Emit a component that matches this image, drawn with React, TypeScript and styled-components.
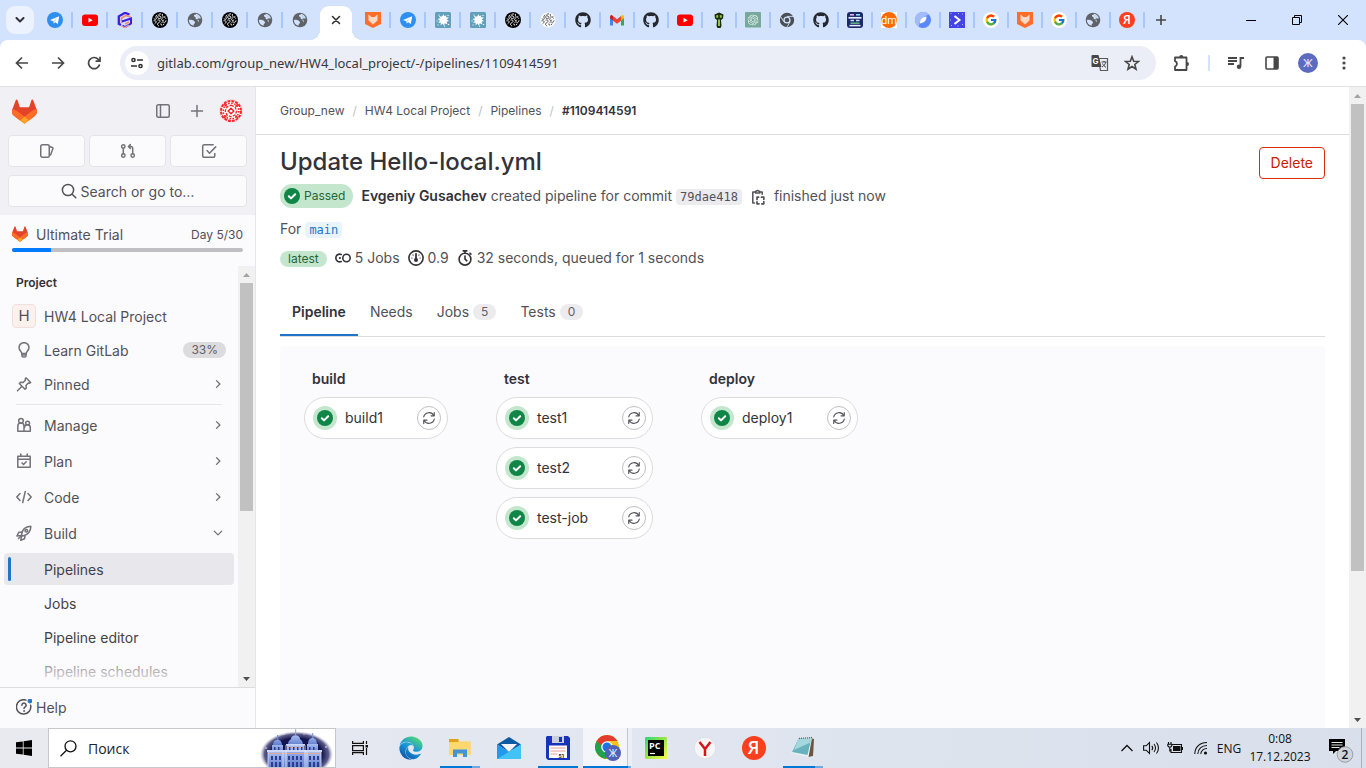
import React from 'react';
import styled, { createGlobalStyle, css } from 'styled-components';
import { FaGithub, FaEdge } from 'react-icons/fa';
import { SiOpenai } from 'react-icons/si';
import { FcGoogle } from 'react-icons/fc';

const uiFont = `Inter, "Noto Sans", sans-serif`;
const segoe = `"Open Sans", "Noto Sans", sans-serif`;
const mono = `"DejaVu Sans Mono", "Liberation Mono", monospace`;

const GlobalStyle = createGlobalStyle`
  *, *::before, *::after { box-sizing: border-box; }
  body { margin: 0; background: #fff; font-family: ${uiFont}; font-size: 14px; color: #333238; }
  button, input { font: inherit; color: inherit; border: 0; padding: 0; margin: 0; background: none; outline: 0; }
  a { color: inherit; text-decoration: none; }
  ul, h1, h2, p { margin: 0; padding: 0; list-style: none; }
  svg { display: block; flex: none; }
`;

/* ---------- shell ---------- */

const Screen = styled.div`
  display: flex;
  flex-direction: column;
  height: 100vh;
  overflow: hidden;
`;

/* ---------- browser chrome ---------- */

const TabStrip = styled.div`
  display: flex;
  align-items: center;
  height: 40px;
  flex: none;
  padding-left: 6px;
  background: #d3e3fd;
`;

const TabSearch = styled.button`
  width: 28px;
  height: 28px;
  margin-right: 4px;
  border-radius: 9px;
  background: #ecf3fe;
  display: grid;
  place-items: center;
`;

const Tab = styled.button<{ $narrow?: boolean; $last?: boolean }>`
  display: flex;
  align-items: center;
  justify-content: space-between;
  flex: none;
  width: ${p => (p.$narrow ? 34 : 35)}px;
  height: 16px;
  padding-left: ${p => (p.$narrow ? 8 : 9)}px;
  border-right: 2px solid ${p => (p.$last ? 'transparent' : '#a8c7fa')};
`;

const ActiveTab = styled.div`
  position: relative;
  align-self: flex-end;
  display: grid;
  place-items: center;
  width: 32px;
  height: 34px;
  padding-bottom: 6px;
  margin: 0 4px 0 2px;
  border-radius: 9px 9px 0 0;
  background: #fff;
  &::before, &::after {
    content: '';
    position: absolute;
    bottom: 0;
    width: 10px;
    height: 10px;
  }
  &::before { left: -10px; background: radial-gradient(circle at 0 0, transparent 10px, #fff 10px); }
  &::after { right: -10px; background: radial-gradient(circle at 100% 0, transparent 10px, #fff 10px); }
`;

const NewTab = styled.button`
  width: 32px;
  height: 28px;
  display: grid;
  place-items: center;
`;

const WindowControls = styled.div`
  display: flex;
  margin-left: auto;
`;

const WindowButton = styled.button`
  width: 46px;
  height: 40px;
  display: grid;
  place-items: center;
`;

const ToolbarBack = styled.div`
  flex: none;
  background: #d3e3fd;
`;

const Toolbar = styled.div`
  display: flex;
  align-items: center;
  height: 47px;
  padding: 0 4px;
  background: #fff;
  border-bottom: 1px solid #e1e1e1;
  border-radius: 8px 8px 0 0;
`;

const ToolButton = styled.button`
  width: 36px;
  height: 34px;
  display: grid;
  place-items: center;
`;

const Omnibox = styled.div`
  display: flex;
  align-items: center;
  flex: 1;
  min-width: 0;
  height: 34px;
  margin: 0 8px;
  padding: 0 8px 0 5px;
  border-radius: 17px;
  background: #ebeef7;
`;

const SiteInfo = styled.button`
  width: 24px;
  height: 24px;
  border-radius: 50%;
  background: #fff;
  display: grid;
  place-items: center;
`;

const UrlInput = styled.input`
  flex: 1;
  min-width: 0;
  margin-left: 8px;
  font-family: "Noto Sans", sans-serif;
  font-size: 13px;
  color: #37383b;
`;

const OmniButton = styled.button`
  width: 32px;
  height: 28px;
  display: grid;
  place-items: center;
`;

const ToolDivider = styled.span`
  width: 2px;
  height: 16px;
  margin: 0 8px;
  background: #d3e3fd;
`;

/* ---------- scroll bar ---------- */

const Rail = styled.div`
  display: flex;
  flex-direction: column;
  flex: none;
  width: 17px;
  background: #f1f1f1;
`;

const RailArrow = styled.button`
  height: 17px;
  flex: none;
  display: grid;
  place-items: center;
`;

const RailTrack = styled.div`
  flex: 1;
  min-height: 0;
  padding: 0 2px;
`;

const RailThumb = styled.div<{ $share: number }>`
  height: ${p => p.$share}%;
  background: #c1c1c1;
`;

function ScrollRail({ share }: { share: number }) {
  return (
    <Rail>
      <RailArrow aria-label="Scroll up">
        <svg width="7" height="4" viewBox="0 0 7 4"><path d="M3.5 0 7 4H0z" fill="#a3a3a3" /></svg>
      </RailArrow>
      <RailTrack><RailThumb $share={share} /></RailTrack>
      <RailArrow aria-label="Scroll down">
        <svg width="7" height="4" viewBox="0 0 7 4"><path d="M0 0h7L3.5 4z" fill="#505050" /></svg>
      </RailArrow>
    </Rail>
  );
}

/* ---------- sidebar ---------- */

const Page = styled.div`
  display: flex;
  flex: 1;
  min-height: 0;
`;

const Sidebar = styled.aside`
  display: flex;
  flex-direction: column;
  flex: none;
  width: 256px;
  border-right: 1px solid #e6e6ea;
  background: #fbfafd;
`;

const SideTop = styled.div`
  display: flex;
  flex-direction: column;
  gap: 8px;
  padding: 8px;
  background: #f1f0f4;
`;

const BrandRow = styled.div`
  display: flex;
  align-items: center;
  height: 32px;
  padding: 0 4px;
`;

const BrandActions = styled.div`
  display: flex;
  align-items: center;
  gap: 2px;
  margin-left: auto;
  color: #737278;
`;

const BrandButton = styled.button`
  width: 32px;
  height: 32px;
  display: grid;
  place-items: center;
`;

const AvatarButton = styled.button`
  width: 24px;
  height: 24px;
  margin-left: 4px;
`;

const ShortcutRow = styled.div`
  display: grid;
  grid-template-columns: repeat(3, 1fr);
  gap: 4px;
`;

const sideBox = css`
  display: flex;
  align-items: center;
  justify-content: center;
  height: 32px;
  border: 1px solid #e5e4e9;
  border-radius: 4px;
  background: #fbfafd;
`;

const Shortcut = styled.button`
  ${sideBox}
  color: #737278;
`;

const SideSearch = styled.button`
  ${sideBox}
  gap: 4px;
  color: #535158;
`;

const Trial = styled.a`
  display: block;
  height: 51px;
  padding: 9px 12px 0;
  color: #535158;
`;

const TrialRow = styled.div`
  display: flex;
  align-items: center;
  gap: 8px;
  height: 20px;
`;

const TrialDay = styled.span`
  margin-left: auto;
  font-size: 12px;
`;

const TrialBar = styled.div`
  height: 4px;
  margin-top: 4px;
  border-radius: 2px;
  overflow: hidden;
  background: #bfbfc3;
`;

const TrialFill = styled.div`
  width: 17%;
  height: 100%;
  background: #007bff;
`;

const SideScroll = styled.div`
  display: flex;
  flex: 1;
  min-height: 0;
`;

const SideNav = styled.nav`
  position: relative;
  flex: 1;
  overflow: hidden;
  &::after {
    content: '';
    position: absolute;
    left: 0;
    right: 0;
    bottom: 0;
    height: 40px;
    background: linear-gradient(rgba(251, 250, 253, 0), #fbfafd);
  }
`;

const SideTitle = styled.h2`
  height: 33px;
  padding: 0 16px;
  font-size: 12px;
  line-height: 34px;
  font-weight: 600;
`;

const NavRow = styled.a<{ $tall?: boolean }>`
  display: flex;
  align-items: center;
  gap: 8px;
  height: ${p => (p.$tall ? 36 : 34)}px;
  padding: 0 12px;
  color: #535158;
`;

const NavIcon = styled.span`
  width: 24px;
  display: grid;
  place-items: center;
  color: #737278;
`;

const NavEnd = styled.span`
  margin: 0 2px 0 auto;
  color: #737278;
`;

const NavCount = styled.span`
  margin-left: auto;
  height: 16px;
  padding: 0 8px;
  border-radius: 8px;
  background: #dcdcde;
  color: #626168;
  font-size: 12px;
  line-height: 16px;
`;

const ProjectLetter = styled.span`
  width: 24px;
  height: 24px;
  border: 1px solid #f3dede;
  border-radius: 4px;
  background: #fdf1ee;
  font-size: 15px;
  line-height: 22px;
  text-align: center;
`;

const NavRule = styled.hr`
  height: 1px;
  margin: 3px 16px 2px;
  border: 0;
  background: #e6e5ea;
`;

const SubList = styled.ul`
  padding: 2px 4px 0;
`;

const SubLink = styled.a<{ $active?: boolean }>`
  display: flex;
  align-items: center;
  height: 32px;
  margin-bottom: 2px;
  padding-left: 4px;
  border-radius: 4px;
  color: #434248;
  ${p => p.$active && css`background: #e8e7ec;`}
  &::before {
    content: '';
    width: 3px;
    height: 24px;
    margin-right: 33px;
    border-radius: 2px;
    background: ${p => (p.$active ? '#1f75cb' : 'transparent')};
  }
`;

const HelpBar = styled.div`
  display: flex;
  align-items: center;
  height: 41px;
  padding: 0 0 2px 16px;
  border-top: 1px solid #dcdcde;
`;

const HelpButton = styled.button`
  display: flex;
  align-items: center;
  gap: 4px;
  color: #535158;
`;

/* ---------- main ---------- */

const Main = styled.main`
  display: flex;
  flex-direction: column;
  flex: 1;
  min-width: 0;
  background: #fff;
`;

const Crumbs = styled.nav`
  display: flex;
  align-items: center;
  gap: 8px;
  flex: none;
  height: 48px;
  padding: 0 24px;
  border-bottom: 1px solid #dcdcde;
  font-size: 12px;
  color: #535158;
  strong { font-weight: 600; color: #333238; }
`;

const Slash = styled.span`
  color: #bfbfc3;
`;

const Content = styled.div`
  display: flex;
  flex-direction: column;
  flex: 1;
  min-height: 0;
  padding: 12px 24px 0;
`;

const TitleRow = styled.header`
  display: flex;
  align-items: flex-start;
  justify-content: space-between;
  height: 37px;
`;

const Title = styled.h1`
  font-size: 24px;
  line-height: 30px;
  font-weight: 500;
`;

const DeleteButton = styled.button`
  height: 32px;
  padding: 0 11px;
  border: 1px solid #dd2b0e;
  border-radius: 4px;
  line-height: 18px;
  color: #c91c00;
`;

const InfoRow = styled.div`
  display: flex;
  align-items: center;
  height: 24px;
  line-height: 18px;
  color: #535158;
`;

const PassedBadge = styled.a`
  display: flex;
  align-items: center;
  gap: 4px;
  height: 24px;
  margin-right: 8px;
  padding: 0 8px 0 4px;
  border-radius: 12px;
  background: #c3e6cd;
  color: #24663b;
  font-size: 12px;
`;

const Author = styled.a`
  margin-right: 4px;
  font-weight: 600;
  color: #333238;
`;

const Code = styled.code<{ $link?: boolean }>`
  height: 16px;
  margin: 2px 0 0 4px;
  padding: 0 4px;
  border-radius: 4px;
  font-family: ${mono};
  font-size: 12px;
  line-height: 16px;
  background: ${p => (p.$link ? '#e9f3fc' : '#ececef')};
  color: ${p => (p.$link ? '#1f75cb' : '#535158')};
`;

const CopyButton = styled.button`
  margin: 2px 8px 0;
  color: #535158;
`;

const RefRow = styled(InfoRow)`
  margin: 9px 0 5px;
`;

const LatestBadge = styled.span`
  height: 16px;
  margin: 2px 8px 0 0;
  padding: 0 8px;
  border-radius: 8px;
  background: #c3e6cd;
  color: #24663b;
  font-size: 12px;
  line-height: 16px;
`;

const Stat = styled.span`
  display: flex;
  align-items: center;
  gap: 4px;
  margin-right: 8px;
  svg { color: #333238; }
`;

const Tabs = styled.div`
  display: flex;
  flex: none;
  height: 49px;
  margin-top: 18px;
  border-bottom: 1px solid #dcdcde;
`;

const TabLink = styled.button<{ $active?: boolean }>`
  display: flex;
  align-items: center;
  gap: 4px;
  padding: 2px 12px 0;
  line-height: 18px;
  color: #535158;
  border-bottom: 2px solid transparent;
  ${p => p.$active && css`
    border-color: #1f75cb;
    color: #333238;
    font-weight: 600;
  `}
`;

const TabCount = styled.span`
  height: 16px;
  padding: 0 8px;
  border-radius: 8px;
  background: #ececef;
  color: #626168;
  font-size: 12px;
  line-height: 16px;
`;

const Graph = styled.section`
  display: flex;
  gap: 48px;
  flex: 1;
  min-height: 0;
  margin-top: 9px;
  padding: 24px;
  border-radius: 4px 4px 0 0;
  background: #fbfafd;
  overflow: hidden;
`;

const Stage = styled.div<{ $width: number }>`
  display: flex;
  flex-direction: column;
  gap: 8px;
  flex: none;
  width: ${p => p.$width}px;
`;

const StageName = styled.h2`
  height: 19px;
  padding-left: 8px;
  font-size: 14px;
  line-height: 18px;
  font-weight: 600;
`;

const JobCard = styled.div`
  display: flex;
  align-items: center;
  height: 42px;
  padding: 0 6px 0 8px;
  border: 1px solid #dcdcde;
  border-radius: 21px;
  line-height: 18px;
  background: #fff;
`;

const JobStatus = styled.span`
  width: 24px;
  height: 24px;
  margin-right: 8px;
  border-radius: 50%;
  background: #c3e6cd;
  display: grid;
  place-items: center;
`;

const RetryButton = styled.button`
  width: 24px;
  height: 24px;
  margin-left: auto;
  border: 1px solid #bfbfc3;
  border-radius: 50%;
  display: grid;
  place-items: center;
  color: #535158;
`;

/* ---------- taskbar ---------- */

const Taskbar = styled.footer`
  display: flex;
  flex: none;
  height: 40px;
  font-family: ${segoe};
  background: linear-gradient(90deg, #e9eaef, #e1e6f0 45%, #d9e0eb);
`;

const TaskButton = styled.button<{ $active?: boolean }>`
  position: relative;
  flex: none;
  width: 49px;
  padding-right: 1px;
  display: grid;
  place-items: center;
  background: ${p => (p.$active ? 'linear-gradient(90deg, #f3f5fa 44px, #c3c9d3 44px, #c3c9d3 45px, #eceff5 45px)' : 'none')};
`;

const StartButton = styled(TaskButton)`
  width: 48px;
  padding: 0;
`;

const TaskViewButton = styled(StartButton)`
  margin-right: 3px;
`;

const RunMark = styled.span<{ $wide?: boolean; $stacked?: boolean }>`
  position: absolute;
  left: ${p => (p.$wide ? 0 : 4)}px;
  right: ${p => (p.$wide ? 1 : 5)}px;
  bottom: 0;
  height: 2px;
  background: ${p =>
    p.$stacked ? `linear-gradient(90deg, #0078d7 ${p.$wide ? 45 : 32}px, #6fa9df 0)` : '#0078d7'};
`;

const TaskSearch = styled.label`
  display: flex;
  align-items: center;
  flex: none;
  width: 288px;
  padding: 0 2px 0 11px;
  border: 1px solid #c6c7ca;
  background: #fff;
  overflow: hidden;
`;

const TaskSearchInput = styled.input`
  flex: 1;
  min-width: 0;
  margin-left: 11px;
  font-size: 14px;
  color: #111;
  &::placeholder { color: #222; opacity: 1; }
`;

const Tray = styled.div`
  display: flex;
  align-items: center;
  margin-left: auto;
  color: #111;
  font-size: 12px;
`;

const TrayButton = styled.button<{ $wide?: boolean }>`
  width: ${p => (p.$wide ? 28 : 24)}px;
  height: 40px;
  display: grid;
  place-items: center;
`;

const Language = styled.button`
  width: 28px;
  font-size: 12px;
`;

const Clock = styled.button`
  width: 74px;
  font-size: 12px;
  line-height: 18px;
`;

const NoticeButton = styled.button`
  width: 45px;
  height: 40px;
  display: grid;
  place-items: center;
  margin-right: 4px;
  padding: 4px 0 0 4px;
  border-right: 1px solid #a9b1bd;
`;

/* ---------- icons ---------- */

const line = (w = 1.5) => ({
  fill: 'none',
  stroke: 'currentColor',
  strokeWidth: w,
  strokeLinecap: 'round' as const,
  strokeLinejoin: 'round' as const,
});

const Icon16 = ({ children, size = 16 }: { children: React.ReactNode; size?: number }) => (
  <svg width={size} height={size} viewBox="0 0 16 16" {...line()}>{children}</svg>
);

const Tanuki = ({ size }: { size: number }) => (
  <svg width={size} height={size} viewBox="0 0 25 24">
    <path d="m24.507 9.5-.034-.09L21.082.562a.896.896 0 0 0-1.694.091l-2.29 7.01H7.825L5.535.653a.898.898 0 0 0-1.694-.09L.451 9.411.416 9.5a6.297 6.297 0 0 0 2.09 7.278l.012.01.03.022 5.16 3.867 2.56 1.935 1.554 1.176a1.051 1.051 0 0 0 1.268 0l1.555-1.176 2.56-1.935 5.197-3.89.014-.01A6.297 6.297 0 0 0 24.507 9.5Z" fill="#E24329" />
    <path d="m24.507 9.5-.034-.09a11.44 11.44 0 0 0-4.56 2.051l-7.447 5.632 4.742 3.584 5.197-3.89.014-.01A6.297 6.297 0 0 0 24.507 9.5Z" fill="#FC6D26" />
    <path d="m7.707 20.677 2.56 1.935 1.555 1.176a1.051 1.051 0 0 0 1.268 0l1.555-1.176 2.56-1.935-4.743-3.584-4.755 3.584Z" fill="#FCA326" />
    <path d="M5.01 11.461a11.43 11.43 0 0 0-4.56-2.05L.416 9.5a6.297 6.297 0 0 0 2.09 7.278l.012.01.03.022 5.16 3.867 4.745-3.584-7.444-5.632Z" fill="#FC6D26" />
  </svg>
);

const CheckDisc = () => (
  <svg width="16" height="16" viewBox="0 0 16 16">
    <circle cx="8" cy="8" r="8" fill="#108548" />
    <path d="m4.8 8.2 2.2 2.2 4.2-4.2" fill="none" stroke="#fff" strokeWidth="2" strokeLinecap="round" strokeLinejoin="round" />
  </svg>
);

const Chevron = ({ down }: { down?: boolean }) => (
  <Icon16 size={12}><path d={down ? 'M3 5.5l5 5 5-5' : 'M6 3.500l4.500 4.500L6 12.500'} strokeWidth="1.800" /></Icon16>
);

const Identicon = () => (
  <svg width="24" height="24" viewBox="0 0 24 24" fill="none">
    <circle cx="12" cy="12" r="11.5" fill="#fff" stroke="#e7c9c9" strokeWidth=".6" />
    <circle cx="12" cy="12" r="10" stroke="#f3262a" strokeWidth="2" strokeDasharray="3 .93" />
    <circle cx="12" cy="12" r="7.800" stroke="#f3262a" strokeWidth="1.600" strokeDasharray="1.600 1.460" />
    <path d="M12 6.200 16 8l1.800 4-1.800 4-4 1.800L8 16l-1.800-4L8 8z" stroke="#f3262a" strokeWidth="1.300" strokeDasharray="3 1.200" />
    <path d="M12 9.200 14.800 12 12 14.800 9.200 12z" stroke="#f3262a" strokeWidth="1.500" />
    <path d="M5 5l2.500 2.500M19 5l-2.500 2.500M5 19l2.500-2.500M19 19l-2.500-2.500" stroke="#f3262a" strokeWidth="1.600" />
  </svg>
);

const icons = {
  panel: <><rect x="1.75" y="1.75" width="12.5" height="12.5" rx="1.5" /><path d="M5.5 2v12" /></>,
  plus: <path d="M8 2.5v11M2.5 8h11" />,
  issues: <><rect x="1.75" y="1.75" width="8.5" height="12.5" rx="1.5" /><path d="M10.5 3.5l2.8 1a1 1 0 0 1 .6 1.3l-2.4 6.2" /></>,
  merge: <><circle cx="3.3" cy="3.5" r="1.7" /><circle cx="3.3" cy="12.5" r="1.7" /><circle cx="12.7" cy="12.5" r="1.7" /><path d="M3.3 5.2v5.6M9 3.5h1.700a2 2 0 0 1 2 2v5.200M10.300 1.600 8.400 3.500l1.900 1.900" /></>,
  todo: <><path d="M13.8 10.5v2.3a1.5 1.5 0 0 1-1.5 1.5H3.2a1.5 1.5 0 0 1-1.5-1.5V3.2a1.5 1.5 0 0 1 1.5-1.5h9" /><path d="m6 7.5 2.5 2.7 6.2-6.3" /></>,
  search: <><circle cx="7" cy="7" r="5.6" /><path d="m11.2 11.2 3.6 3.6" /></>,
  bulb: <><path d="M5.8 11.5c0-2-2.8-2.8-2.8-6a5 4.8 0 0 1 10 0c0 3.2-2.8 4-2.8 6z" /><path d="M6 14.200c.5 1.200 3.500 1.200 4 0M5.800 11.500v1.500h4.400v-1.500" /></>,
  pin: <><path d="m10 1.800 4.700 4.700-1.200.8-1.200-.2L10 9.500l.3 2.600L9 13.200 3.300 7.500l1.200-1.200 2.600.3 2.300-2.400-.2-1.200z" /><path d="m5.700 10.500-4.200 4.200" /></>,
  people: <><circle cx="5" cy="3.8" r="2.3" /><circle cx="11.6" cy="6.200" r="1.900" /><path d="M8 14.200H1.800V9a3.100 3.100 0 0 1 6.200 0zM8.500 14.200h5.800v-3.200a2.800 2.800 0 0 0-5.800-.6" /></>,
  calendar: <><path d="M1.800 3.200h12.400v11H1.800zM1.800 6.300h12.400M4.800 1v2M11.200 1v2" /><path d="m6 10 1.500 1.500 2.700-2.700" /></>,
  code: <path d="M4 4.500.8 8 4 11.500M12 4.500 15.200 8 12 11.500M9.300 2.500l-2.600 11" />,
  rocket: <><path d="M5.500 9.500c.6-4.500 3.700-8 9.300-8.300.3 4.600-2.800 8.700-8 9.900zM6 7 2.800 7.300.9 11l4-.5M9 10.800l-.5 3-3.700 1.400.7-4" /><circle cx="10.3" cy="5.8" r="1.3" /><path d="M4.500 11.500l-2 2" /></>,
};

const HelpIcon = () => (
  <Icon16>
    <path d="M14.600 6.200A7.200 7.200 0 1 1 10 1.100" />
    <path d="M5.900 6.200a2.100 2.100 0 1 1 3.300 1.700c-.8.5-1.200.8-1.200 1.600" />
    <circle cx="8" cy="12" r=".6" fill="currentColor" strokeWidth=".6" />
    <circle cx="14" cy="2" r="2" fill="#1f75cb" stroke="#1f75cb" strokeWidth="1" />
  </Icon16>
);

const CopyIcon = () => (
  <Icon16>
    <path d="M4.500 14H2.800V3h2.500M10 3h2.200v2.200" />
    <path d="M5.500 4V2.300h1a1.200 1.200 0 0 1 2.200 0h1V4z" />
    <path d="M7 10.500V8.200h1.600M11.500 8.200h2.300v2M13.800 12.500v2.300h-2M9 14.800H7v-2" strokeWidth="1.700" />
  </Icon16>
);

const PipelineIcon = () => (
  <svg width="16" height="16" viewBox="0 0 16 16" {...line(1.6)}>
    <path d="M6.200 4.400A3.900 3.900 0 1 0 6.200 11.600" />
    <circle cx="11.500" cy="8" r="3.700" />
    <circle cx="4.900" cy="8" r="1.100" fill="currentColor" stroke="none" />
  </svg>
);

const GaugeIcon = () => (
  <svg width="16" height="16" viewBox="0 0 16 16" {...line(1.6)}>
    <circle cx="8" cy="8" r="7.100" />
    <path d="M8 3.800v5" strokeWidth="1.800" />
    <circle cx="8" cy="10" r="2" fill="currentColor" stroke="none" />
    <path d="M3.800 8h.2M12 8h.2M5 5l.1.100M11 5l-.1.100" strokeWidth="1.200" />
  </svg>
);

const TimerIcon = () => (
  <svg width="16" height="16" viewBox="0 0 16 16" {...line(1.6)}>
    <circle cx="8" cy="9.200" r="5.900" />
    <path d="M6.200.9h3.600M8 1v2M13 3.200l.9.900M8 6v3.200l1.800 1.600" />
  </svg>
);

const RetryIcon = () => (
  <svg width="14" height="14" viewBox="0 0 16 16" {...line(1.3)}>
    <path d="M2 6.800a6.200 6.200 0 0 1 11.500-1.600M14 9.200A6.200 6.200 0 0 1 2.500 10.800" />
    <path d="M14 1.800v3.700h-3.700M2 14.200v-3.700h3.700" />
  </svg>
);

/* favicons */

const Fav = ({ children }: { children: React.ReactNode }) => (
  <svg width="16" height="16" viewBox="0 0 16 16">{children}</svg>
);

const Telegram = () => (
  <Fav>
    <circle cx="8" cy="8" r="8" fill="#2f8ff0" />
    <path d="M3 7.900 12.200 4.200 10.800 12 8.200 10.200 6.800 11.600 6.400 9.200z" fill="#fff" />
    <path d="M6.400 9.200 10.500 5.900 7.300 9.700 6.800 11.600z" fill="#a9cff5" />
  </Fav>
);
const YouTube = () => (
  <Fav><rect y="2.500" width="16" height="11.500" rx="3" fill="#f00" /><path d="m6.500 5.800 4.200 2.400-4.200 2.400z" fill="#fff" /></Fav>
);
const GBox = () => (
  <Fav>
    <path d="M12.500 2.500 8 .8 1.800 4.300v7.500L4 13" fill="none" stroke="#3c1ee6" strokeWidth="2.300" />
    <path d="M13.500 5 9 3.500 4.500 6v5" fill="none" stroke="#f08a70" strokeWidth="1.800" />
    <path d="M5 9.500 14 6.500v5L8 15.200l-2.500-1.700" fill="none" stroke="#3c1ee6" strokeWidth="2" />
    <path d="m8 12 4-2" stroke="#f08a70" strokeWidth="1.800" />
    <path d="m4 14 4 1.600 4-2.500" fill="none" stroke="#f3a58f" strokeWidth="1.200" />
  </Fav>
);
const Globe = () => (
  <Fav>
    <circle cx="8" cy="8" r="7.300" fill="#5f6368" />
    <path d="M9 1.800c-.2 1.200-1 1.300-2 1.500-.4 1.400 1 1.200 1.500 1.600.6.700-.2 1.600.4 2.200.8.500 2.200.2 2.700 1.200.2.700 0 1.500-.4 2.200M1.900 8c1.600-.5 3.700-.3 4.900.7.700.7 1.300 1 1.200 2-.2.900-1.300 1-1.400 2v1.100A6 6 0 0 1 1.900 8z" fill="#d3e3fd" />
    <path d="M9 1.800a6.200 6.200 0 0 1 4.900 4.400c-1 .8-2-.2-2.700.4-.9.700-2.200 0-2.300-1C8.700 4.500 7 4.600 7 3.300 8 3.100 8.800 3 9 1.800z" fill="#d3e3fd" opacity=".9" />
  </Fav>
);
const Maze = ({ light }: { light?: boolean }) => (
  <Fav>
    <circle cx="8" cy="8" r={light ? 7.600 : 8} fill={light ? '#fff' : '#000'} />
    <g fill="none" stroke={light ? '#444' : '#fff'} strokeWidth=".9" strokeLinecap="round">
      <path d="M8.600 1.900C6 1.500 6.200 4 7.800 4.200c1.800.3 1.300 2.200 0 2.400-2 .2-2.400-1-1.900-2.500" />
      <path d="M4.800 3C3 4.500 4.200 5.500 4.300 6.500c.2 1.300-1.800 1-2.300.3M1.900 8.800c.8 0 1.800-.2 2.200.7.500 1.200-1 1.600-1.300 2" />
      <path d="M5.800 8c1.500-.5 2.600.3 2.100 1.700-.6 1.300-2.200 1-2.400 2.200 0 1 .4 1.600 1.300 2" />
      <path d="M10.300 2.300c-.6 1.500.9 1.500.8 2.800-.1 1.200-1.700 1.300-1.400 2.700.3 1.200 1.600.9 2.200.2M13 4.200c-1.200 1 0 1.500.6 2.200" />
      <path d="M9.800 10.200c1.200-.9 2 .3 3 .1.800-.2 1.100-.9 1.200-1.600M8.500 12c.9-.4 1.400.2 1.300 1.200M11.500 12.700l.4-.8" />
    </g>
  </Fav>
);
const Fox = () => (
  <Fav>
    <path d="M0 0h16v12l-8 4-8-4z" fill="#ff6d2b" />
    <path d="M3.500 2.500 6.500 5h3l3-2.500v6L8 12.500 3.500 8.500z" fill="#ffd9c5" />
  </Fav>
);
const Splash = () => (
  <Fav>
    <rect width="16" height="16" rx="1.500" fill="#629fbb" />
    <path d="m7.500 4 1-2 .8 2.300 2-1-.3 2 3 .3-2.300 1.900 2.300 1.500-2.500.8 1 2.700-2.700-1.300-.8 2.600-1.500-2.300-2 2 .3-2.800-2.800.1 2-2L2.500 7l2.700-.7-1.500-2.800L6.200 4.800z" fill="#fff" />
    <path d="M4 3h.1M13 3.500h.1M3 13h.1M13.500 12.500h.1M9.500 14.200h.1M2 9h.1" stroke="#fff" strokeWidth="1" strokeLinecap="square" />
  </Fav>
);
const Gmail = () => (
  <Fav>
    <path d="M1 4v9.500h3V7z" fill="#4285f4" />
    <path d="M15 4v9.500h-3V7z" fill="#34a853" />
    <path d="M1 4.200 2.200 2.800 4 4v4.500L1 6.300z" fill="#c5221f" />
    <path d="M4 4l4 3.200L12 4v4.800l-4 3-4-3z" fill="#ea4335" />
    <path d="M12 4l1.800-1.200L15 4.200v2.100l-3 2.500z" fill="#fbbc04" />
  </Fav>
);
const Figure = () => (
  <Fav>
    <path d="M3.500 2.500 8 .5l4.500 2-.5 4-2 1.500.5 6-1 2H6.500l-1-2L6 8 4 6.500z" fill="#1d2a10" />
    <path d="M5 3.500 7.200 3v2.500L5.500 6zM11 3.500 8.800 3v2.500l1.700.5zM7 7.500h2v6.500H7z" fill="#8fc93a" />
  </Fav>
);
const ChatGpt = () => (
  <Fav>
    <path d="M1 0h14a1 1 0 0 1 1 1v14.500H1a1 1 0 0 1-1-1V1a1 1 0 0 1 1-1z" fill="#76a99a" />
    <g transform="translate(2.500 2.500)" color="#e6f2ee"><SiOpenai size={11} /></g>
  </Fav>
);
const ChromeGray = () => (
  <Fav>
    <circle cx="8" cy="8" r="7.200" fill="#4b4f54" />
    <circle cx="8" cy="8" r="3.600" fill="#d3e3fd" />
    <circle cx="8" cy="8" r="2.300" fill="#4b4f54" />
    <path d="M8 4.400h7M4.900 9.800 1.500 4.500M11.100 9.800l-3.400 5.600" stroke="#d3e3fd" strokeWidth=".9" />
  </Fav>
);
const Racks = () => (
  <Fav>
    <rect width="16" height="16" rx="3" fill="#1b2a6b" />
    <path d="M3 2.800h4" stroke="#e8b4e8" strokeWidth="1.600" /><path d="M9 2.800h4" stroke="#8fd8f5" strokeWidth="1.600" />
    <path d="M1.500 5.800h13" stroke="#e9eefc" strokeWidth="1.700" /><path d="M3.500 8.500h3.500M9 8.500h3.500" stroke="#cfe0fa" strokeWidth="1.700" />
    <path d="M3.500 11.200h9" stroke="#62b98a" strokeWidth="1.500" /><path d="M2.500 13.600h11" stroke="#e9eefc" strokeWidth="1.500" />
  </Fav>
);
const Dm = () => (
  <Fav>
    <rect width="16" height="16" fill="#fff" />
    <circle cx="8" cy="8" r="8" fill="#ff6a00" />
    <text x="8" y="12" textAnchor="middle" fontFamily="Roboto, sans-serif" fontSize="11" fill="#fff">dm</text>
  </Fav>
);
const BlueDisc = () => (
  <Fav>
    <circle cx="8" cy="8" r="8" fill="#5a86ff" />
    <path d="M0 8a8 8 0 0 1 14-5.200C9 3.500 4.500 8 4 14.800A8 8 0 0 1 0 8z" fill="#a3bcff" />
    <path d="M11.500 4.500C11.500 8 10 10.500 5 11.500 4.500 8 7 5 11.500 4.500z" fill="#fff" />
  </Fav>
);
const Arrow = () => (
  <Fav>
    <rect width="16" height="16" fill="#4343e8" />
    <path d="m5.500 4 5 4-5 4" fill="none" stroke="#fff" strokeWidth="2" />
    <path d="M1.500 1.500h1M13 2h1M2 13.500h1M13 12.500h1M1 8h1M9 1.500h1M8.500 14h1" stroke="#b9b9ff" />
  </Fav>
);
const GoogleFav = () => (
  <Fav><circle cx="8" cy="8" r="8" fill="#fff" /><g transform="translate(1.500 1.500)"><FcGoogle size={13} /></g></Fav>
);
const Ya = ({ size = 16 }: { size?: number }) => (
  <svg width={size} height={size} viewBox="0 0 16 16">
    <circle cx="8" cy="8" r="8" fill="#fc3f1d" />
    <text x="7.800" y="12.300" textAnchor="middle" fontFamily="'Open Sans', sans-serif" fontWeight="600" fontSize="12" fill="#fff">Я</text>
  </svg>
);
const Hub = () => <FaGithub size={16} color="#24292f" />;

const leadingTabs = [Telegram, YouTube, GBox, Maze, Globe, Maze, Globe, Globe];
const wideTabs = [Fox, Telegram, Splash, Splash, Maze, () => <Maze light />, Hub];
const narrowTabs = [
  Gmail, Hub, YouTube, Figure, ChatGpt, ChromeGray, Hub, Racks, Dm, BlueDisc, Arrow, GoogleFav, Fox, GoogleFav, Globe, Ya,
];

/* ---------- sections ---------- */

function BrowserTabs() {
  return (
    <TabStrip>
      <TabSearch aria-label="Search tabs">
        <svg width="10" height="6" viewBox="0 0 10 6" {...line(2)}><path d="m1.500 1 3.500 3.500L8.500 1" /></svg>
      </TabSearch>
      {leadingTabs.map((F, i) => <Tab key={i} $last={i === 7}><F /></Tab>)}
      <ActiveTab>
        <button aria-label="Close tab">
          <svg width="10" height="10" viewBox="0 0 10 10" {...line(1.6)}><path d="m1.500 1.500 7 7M8.500 1.500l-7 7" /></svg>
        </button>
      </ActiveTab>
      {wideTabs.map((F, i) => <Tab key={i}><F /></Tab>)}
      {narrowTabs.map((F, i) => <Tab key={i} $narrow><F /></Tab>)}
      <NewTab aria-label="New tab">
        <svg width="12" height="12" viewBox="0 0 12 12"><path d="M6 1v10M1 6h10" stroke="#474747" strokeWidth="1.600" /></svg>
      </NewTab>
      <WindowControls>
        <WindowButton aria-label="Minimize"><svg width="10" height="10"><path d="M0 5.500h10" stroke="#000" /></svg></WindowButton>
        <WindowButton aria-label="Restore"><svg width="10" height="10" fill="none" stroke="#000"><path d="M.5 2.500h7v7h-7zM2.500 2.500v-2h7v7h-2" /></svg></WindowButton>
        <WindowButton aria-label="Close"><svg width="10" height="10"><path d="m0 0 10 10M10 0 0 10" stroke="#000" strokeWidth="1.100" /></svg></WindowButton>
      </WindowControls>
    </TabStrip>
  );
}

function BrowserToolbar() {
  const dark = { fill: 'none', stroke: '#474747', strokeWidth: 1.7 };
  return (
    <ToolbarBack>
      <Toolbar>
        <ToolButton aria-label="Back"><svg width="14" height="14" viewBox="0 0 14 14" {...dark}><path d="M13 7H2M7 1.500 1.500 7 7 12.500" /></svg></ToolButton>
        <ToolButton aria-label="Forward"><svg width="14" height="14" viewBox="0 0 14 14" {...dark}><path d="M1 7h11M7 1.500 12.500 7 7 12.500" /></svg></ToolButton>
        <ToolButton aria-label="Reload"><svg width="14" height="14" viewBox="0 0 14 14" {...dark}><path d="M12.600 8.500A5.600 5.600 0 1 1 11.300 3.300L12.500 4.500M13 .8v4.400H8.600" /></svg></ToolButton>
        <Omnibox>
          <SiteInfo aria-label="Site information">
            <svg width="12" height="12" viewBox="0 0 12 12" fill="none" stroke="#303030" strokeWidth="1.500">
              <circle cx="2.500" cy="3" r="1.600" /><path d="M6 3h6M0 9h6" /><circle cx="9.500" cy="9" r="1.600" />
            </svg>
          </SiteInfo>
          <UrlInput aria-label="Address" defaultValue="gitlab.com/group_new/HW4_local_project/-/pipelines/1109414591" />
          <OmniButton aria-label="Translate">
            <svg width="18" height="18" viewBox="0 0 18 18">
              <path d="M7.500 4.500h9v12h-7z" fill="none" stroke="#5a5a5a" strokeWidth="1.200" />
              <path d="M1.500 1h6l3 12h-9a1 1 0 0 1-1-1V2a1 1 0 0 1 1-1z" fill="#474747" />
              <text x="1.500" y="10" fontFamily="Inter, sans-serif" fontSize="8" fontWeight="700" fill="#fff">G</text>
              <path d="M10.500 8h5M13 6.800V8M14.800 8c-.6 2.500-2 4-3.800 5M11.500 9.500c.8 1.800 2 3 3.500 3.800" fill="none" stroke="#474747" />
            </svg>
          </OmniButton>
          <OmniButton aria-label="Bookmark">
            <svg width="16" height="16" viewBox="0 0 16 16" fill="none" stroke="#474747" strokeWidth="1.600">
              <path d="m8 1.800 1.700 4.400 4.700.3-3.600 3 1.200 4.600L8 11.500l-4 2.600 1.200-4.600-3.600-3 4.700-.3z" />
            </svg>
          </OmniButton>
        </Omnibox>
        <ToolButton aria-label="Extensions">
          <svg width="18" height="18" viewBox="0 0 18 18" fill="none" stroke="#474747" strokeWidth="1.800">
            <path d="M2 3.500h11.500v12.500H2v-3.500c2.600-.8 2.600-4.500 0-5.300z" strokeLinejoin="round" />
            <path d="M6.300 3a2 2 0 0 1 4 0zM14 8a2 2 0 0 1 0 4z" fill="#474747" stroke="none" />
          </svg>
        </ToolButton>
        <ToolDivider />
        <ToolButton aria-label="Media">
          <svg width="16" height="14" viewBox="0 0 16 14" fill="none" stroke="#474747" strokeWidth="1.800">
            <path d="M0 2h9M0 5h9M0 8h6M12.500 10.500V2H16" /><circle cx="11" cy="10.700" r="2.200" fill="#474747" stroke="none" />
          </svg>
        </ToolButton>
        <ToolButton aria-label="Side panel">
          <svg width="14" height="14" viewBox="0 0 14 14"><rect x="1" y="1" width="12" height="12" rx="1" fill="none" stroke="#474747" strokeWidth="1.600" /><path d="M8.500 1H13v12H8.500z" fill="#474747" /></svg>
        </ToolButton>
        <ToolButton aria-label="Profile">
          <svg width="20" height="20" viewBox="0 0 20 20"><circle cx="10" cy="10" r="10" fill="#5c6bc0" /><text x="10" y="14" textAnchor="middle" fontFamily="'Open Sans', sans-serif" fontSize="11" fill="#fff">Ж</text></svg>
        </ToolButton>
        <ToolButton aria-label="Menu">
          <svg width="4" height="14" viewBox="0 0 4 14" fill="#474747"><circle cx="2" cy="2" r="1.600" /><circle cx="2" cy="7" r="1.600" /><circle cx="2" cy="12" r="1.600" /></svg>
        </ToolButton>
      </Toolbar>
    </ToolbarBack>
  );
}

function ProjectSidebar() {
  const groups: [string, React.ReactNode, boolean][] = [
    ['Manage', icons.people, false],
    ['Plan', icons.calendar, false],
    ['Code', icons.code, false],
    ['Build', icons.rocket, true],
  ];
  return (
    <Sidebar>
      <SideTop>
        <BrandRow>
          <a href="#home" aria-label="Homepage"><Tanuki size={25} /></a>
          <BrandActions>
            <BrandButton aria-label="Hide sidebar"><Icon16>{icons.panel}</Icon16></BrandButton>
            <BrandButton aria-label="Create new"><Icon16>{icons.plus}</Icon16></BrandButton>
            <AvatarButton aria-label="User menu"><Identicon /></AvatarButton>
          </BrandActions>
        </BrandRow>
        <ShortcutRow>
          <Shortcut aria-label="Issues"><Icon16>{icons.issues}</Icon16></Shortcut>
          <Shortcut aria-label="Merge requests"><Icon16>{icons.merge}</Icon16></Shortcut>
          <Shortcut aria-label="To-do list"><Icon16>{icons.todo}</Icon16></Shortcut>
        </ShortcutRow>
        <SideSearch><Icon16>{icons.search}</Icon16>Search or go to…</SideSearch>
      </SideTop>
      <Trial href="#trial">
        <TrialRow><Tanuki size={16} /><span>Ultimate Trial</span><TrialDay>Day 5/30</TrialDay></TrialRow>
        <TrialBar><TrialFill /></TrialBar>
      </Trial>
      <SideScroll>
        <SideNav>
          <SideTitle>Project</SideTitle>
          <NavRow href="#project"><ProjectLetter>H</ProjectLetter>HW4 Local Project</NavRow>
          <NavRow href="#learn"><NavIcon><Icon16>{icons.bulb}</Icon16></NavIcon>Learn GitLab<NavCount>33%</NavCount></NavRow>
          <NavRow href="#pinned"><NavIcon><Icon16>{icons.pin}</Icon16></NavIcon>Pinned<NavEnd><Chevron /></NavEnd></NavRow>
          <NavRule />
          {groups.map(([name, icon, open]) => (
            <NavRow key={name} href={'#' + name} $tall>
              <NavIcon><Icon16>{icon}</Icon16></NavIcon>{name}<NavEnd><Chevron down={open} /></NavEnd>
            </NavRow>
          ))}
          <SubList>
            <li><SubLink href="#pipelines" $active>Pipelines</SubLink></li>
            <li><SubLink href="#jobs">Jobs</SubLink></li>
            <li><SubLink href="#editor">Pipeline editor</SubLink></li>
            <li><SubLink href="#schedules">Pipeline schedules</SubLink></li>
          </SubList>
        </SideNav>
        <ScrollRail share={59} />
      </SideScroll>
      <HelpBar><HelpButton><HelpIcon />Help</HelpButton></HelpBar>
    </Sidebar>
  );
}

const stages = [
  { name: 'build', width: 144, jobs: ['build1'] },
  { name: 'test', width: 157, jobs: ['test1', 'test2', 'test-job'] },
  { name: 'deploy', width: 157, jobs: ['deploy1'] },
];

function PipelinePage() {
  return (
    <Main>
      <Crumbs aria-label="Breadcrumbs">
        <a href="#group">Group_new</a><Slash>/</Slash>
        <a href="#project">HW4 Local Project</a><Slash>/</Slash>
        <a href="#pipelines">Pipelines</a><Slash>/</Slash>
        <strong>#1109414591</strong>
      </Crumbs>
      <Content>
        <TitleRow>
          <Title>Update Hello-local.yml</Title>
          <DeleteButton>Delete</DeleteButton>
        </TitleRow>
        <InfoRow>
          <PassedBadge href="#status"><CheckDisc />Passed</PassedBadge>
          <Author href="#author">Evgeniy Gusachev</Author>
          <span>created pipeline for commit</span>
          <Code>79dae418</Code>
          <CopyButton aria-label="Copy commit SHA"><CopyIcon /></CopyButton>
          <span>finished just now</span>
        </InfoRow>
        <RefRow>For<Code $link>main</Code></RefRow>
        <InfoRow>
          <LatestBadge>latest</LatestBadge>
          <Stat><PipelineIcon />5 Jobs</Stat>
          <Stat><GaugeIcon />0.9</Stat>
          <Stat><TimerIcon />32 seconds, queued for 1 seconds</Stat>
        </InfoRow>
        <Tabs>
          <TabLink $active>Pipeline</TabLink>
          <TabLink>Needs</TabLink>
          <TabLink>Jobs <TabCount>5</TabCount></TabLink>
          <TabLink>Tests <TabCount>0</TabCount></TabLink>
        </Tabs>
        <Graph>
          {stages.map(s => (
            <Stage key={s.name} $width={s.width}>
              <StageName>{s.name}</StageName>
              {s.jobs.map(j => (
                <JobCard key={j}>
                  <JobStatus><CheckDisc /></JobStatus>
                  <a href={'#' + j}>{j}</a>
                  <RetryButton aria-label={'Run ' + j + ' again'}><RetryIcon /></RetryButton>
                </JobCard>
              ))}
            </Stage>
          ))}
        </Graph>
      </Content>
    </Main>
  );
}

const Palace = () => (
  <svg width="73" height="40" viewBox="0 0 73 40">
    <defs>
      <radialGradient id="night" cx=".5" cy=".55" r=".5">
        <stop offset=".7" stopColor="#14144e" /><stop offset=".88" stopColor="#34346d" stopOpacity=".8" /><stop offset="1" stopColor="#8888b0" stopOpacity="0" />
      </radialGradient>
      <linearGradient id="wall" x2="0" y2="1"><stop stopColor="#a9bdf0" /><stop offset="1" stopColor="#5f7fd0" /></linearGradient>
    </defs>
    <rect y="1" width="73" height="46" rx="12" fill="url(#night)" />
    <g fill="url(#wall)">
      <path d="M8 24h53v16H8z" /><path d="M27 17h17v23H27z" />
      <path d="M12 24v-7h11v7zM47 24v-8h11v8z" />
      <path d="M13 17c0-7 9-7 9 0zM48 16c0-8 9-8 9 0zM28 17c0-4 2-5 3-6 0-5 9-5 9 0 1 1 3 2 3 6z" />
      <path d="M17 7h1.200v5H17zM52 5h1.200v5H52zM35 1h1.200v6H35z" />
      <path d="M7 22h55v2H7z" fill="#cdd8f7" /><path d="M26 16h19v1.500H26z" fill="#cdd8f7" />
    </g>
    <g fill="#e3a98c"><path d="M8 25h53v1H8zM27 19h17v1H27z" /></g>
    <g fill="#2d3c8f">
      {[11, 15, 19, 28, 32, 36, 40, 49, 53, 57].map(x => <path key={x} d={`M${x} 28h2v4h-2zM${x} 34h2v6h-2z`} />)}
      {[14, 18, 29, 33, 37, 41, 49, 53].map(x => <path key={x} d={`M${x} 19h1.500v3h-1.500z`} />)}
    </g>
    <g stroke="#dfe6fb" strokeWidth=".8"><path d="M26 17v23M45 17v23M8 24v16M61 24v16M23 24v16M47 24v16" /></g>
    <g fill="#fff"><circle cx="6" cy="20" r=".7" /><circle cx="12" cy="9" r=".7" /><circle cx="24" cy="6" r=".6" /><circle cx="62" cy="10" r=".7" /><circle cx="66" cy="19" r=".8" /><circle cx="44" cy="6" r=".6" /></g>
  </svg>
);

const Explorer = () => (
  <svg width="24" height="24" viewBox="0 0 24 24">
    <path d="M1 3.500h9l1.500 2H22.500V19H1z" fill="#fcd462" /><path d="M1 3h9.500v3H1z" fill="#e0a020" />
    <path d="M1 7h21.500v12H1z" fill="#ffd970" /><path d="M5 13.500h14V21h-4v-3.500H9V21H5z" fill="#3f95d8" />
  </svg>
);
const Mail = () => (
  <svg width="24" height="24" viewBox="0 0 24 24">
    <path d="M0 8.500 12 1l12 7.500L12 16z" fill="#0d5ba3" /><path d="M4 8h16l-8 8z" fill="#f2f6fa" />
    <path d="M0 8.500v14.500h24V8.500L12 16z" fill="#1f9bea" /><path d="M24 8.500V23H0z" fill="#41c3f5" />
  </svg>
);
const Floppy = () => (
  <svg width="24" height="24" viewBox="0 0 24 24">
    <path d="M1 0h21l2 2v22H2l-2-2V1z" fill="#1834b8" />
    <path d="M6 0h12v7H6z" fill="#c9ced8" /><path d="M13 1h3v5h-3z" fill="#1834b8" />
    <path d="M3 9.500h18V22H3z" fill="#fff" /><path d="M4.500 12h15M4.500 15h15M4.500 18h7" stroke="#e89a9a" />
    <text x="12.500" y="21.500" fontFamily="Inter, sans-serif" fontSize="5" fontWeight="700" fill="#222">51</text>
  </svg>
);
const Chrome = () => (
  <svg width="28" height="28" viewBox="0 0 28 28">
    <circle cx="14" cy="13" r="12" fill="#fbc116" />
    <path d="M3.600 7A12 12 0 0 0 13 25l5-9.500-8-1z" fill="#22a04b" /><path d="M3.600 7 9 16l5-9z" fill="#22a04b" /><path d="M3.600 7A12 12 0 0 1 24.400 7H14l-6 4z" fill="#e33b2e" />
    <circle cx="14" cy="13" r="5.800" fill="#fff" /><circle cx="14" cy="13" r="4.500" fill="#1a73e8" />
    <circle cx="20" cy="19" r="8" fill="#5160b8" />
    <text x="20" y="23" textAnchor="middle" fontFamily="'Open Sans', sans-serif" fontSize="10" fill="#fff">Ж</text>
  </svg>
);
const PyCharm = () => (
  <svg width="22" height="22" viewBox="0 0 22 22">
    <defs><linearGradient id="pc" x2="1" y2="1"><stop stopColor="#21d789" /><stop offset=".35" stopColor="#7ee04a" /><stop offset="1" stopColor="#fcf84a" /></linearGradient></defs>
    <rect width="22" height="22" rx="1" fill="url(#pc)" /><rect x="3" y="3" width="16" height="16" fill="#000" />
    <text x="4" y="11.500" fontFamily="'Open Sans', sans-serif" fontSize="9" fontWeight="700" fill="#fff">PC</text><path d="M5 16.500h5" stroke="#fff" strokeWidth="1.200" />
  </svg>
);
const YBrowser = () => (
  <svg width="22" height="22" viewBox="0 0 22 22">
    <circle cx="11" cy="11" r="10.700" fill="#f6f6f7" stroke="#d5d6da" strokeWidth=".6" />
    <path d="m5.500 5 5.500 7v7M16.500 5 11 12" fill="none" stroke="#d7141a" strokeWidth="2.500" />
  </svg>
);
const Notepad = () => (
  <svg width="24" height="24" viewBox="0 0 24 24">
    <path d="m19 2 4 1-1 17-5 1z" fill="#6b5540" />
    <path d="m7 3 14-1-3.500 19L0 17z" fill="#e9f3f4" /><path d="m7.500 2.500 13-.8-4 17.300L1 16z" fill="#69b2bd" /><path d="m7.500 2.500 13-.8-1 4.800L3 14z" fill="#a5d8dc" />
    <path d="M8 2.500 21 1.500" stroke="#666" strokeWidth="1.300" strokeDasharray="1 1" />
  </svg>
);
const EdgeLogo = () => (
  <svg width="24" height="24" viewBox="0 0 24 24">
    <defs><linearGradient id="edge" x1=".2" y1="1" x2=".8" y2="0"><stop stopColor="#0b4fa5" /><stop offset=".5" stopColor="#1a97d8" /><stop offset="1" stopColor="#58dc71" /></linearGradient></defs>
    <FaEdge size={24} fill="url(#edge)" />
  </svg>
);

function WindowsTaskbar() {
  return (
    <Taskbar>
      <StartButton aria-label="Start">
        <svg width="16" height="16" viewBox="0 0 16 16"><path d="M0 2.300 6.800 1.400v6.200H0zM7.600 1.200 16 0v7.600H7.600zM0 8.400h6.800v6.200L0 13.700zM7.600 8.400H16V16l-8.400-1.200z" /></svg>
      </StartButton>
      <TaskSearch>
        <svg width="17" height="17" viewBox="0 0 17 17" fill="none" stroke="#111" strokeWidth="1.300"><circle cx="10.500" cy="6.300" r="5.500" /><path d="m6.500 10.300-6 6" /></svg>
        <TaskSearchInput placeholder="Поиск" aria-label="Поиск" />
        <Palace />
      </TaskSearch>
      <TaskViewButton aria-label="Task view">
        <svg width="16" height="16" viewBox="0 0 16 16" fill="none" stroke="#111" strokeWidth="1.200"><path d="M.6 1v2.400h10.800V1M.6 15v-2.400h10.800V15M.6 5.600h10.800v5H.6zM14.500 1v3M14.500 8v7" /><path d="M13.500 5h2.500v2.500h-2.500z" fill="#111" stroke="none" /></svg>
      </TaskViewButton>
      <TaskButton aria-label="Edge"><EdgeLogo /></TaskButton>
      <TaskButton aria-label="Explorer"><Explorer /><RunMark $stacked /></TaskButton>
      <TaskButton aria-label="Mail"><Mail /></TaskButton>
      <TaskButton aria-label="Commander"><Floppy /><RunMark /></TaskButton>
      <TaskButton aria-label="Chrome" $active><Chrome /><RunMark $wide $stacked /></TaskButton>
      <TaskButton aria-label="PyCharm"><PyCharm /></TaskButton>
      <TaskButton aria-label="Yandex Browser"><YBrowser /></TaskButton>
      <TaskButton aria-label="Yandex"><Ya size={24} /></TaskButton>
      <TaskButton aria-label="Notepad"><Notepad /><RunMark $stacked /></TaskButton>
      <Tray>
        <TrayButton aria-label="Hidden icons"><svg width="12" height="8" viewBox="0 0 12 8" fill="none" stroke="#111" strokeWidth="1.300"><path d="m.5 7 5.500-5.500L11.500 7" /></svg></TrayButton>
        <TrayButton aria-label="Volume">
          <svg width="17" height="14" viewBox="0 0 17 14" fill="none" stroke="#111" strokeWidth="1.100"><path d="M.6 4.800h2.600L6.500 1.500v11L3.200 9.200H.6zM8.800 4.800c1 1.200 1 3.200 0 4.400M11 3c2 2.200 2 5.800 0 8M13.500 1.500c2.600 3.200 2.600 7.800 0 11" /></svg>
        </TrayButton>
        <TrayButton aria-label="Battery">
          <svg width="16" height="14" viewBox="0 0 16 14" fill="none" stroke="#111" strokeWidth="1.100"><path d="M5 3.500h9.500v8H4V8M1.500 1v2M4 1v2M.8 3.200h4v1.500l-1 1.300H1.800L.8 4.700zM2.800 6v4h1" /><path d="M6 5h7.500v5H6zM14 6h2v3h-2z" fill="#111" stroke="none" /></svg>
        </TrayButton>
        <TrayButton aria-label="Network" $wide>
          <svg width="14" height="14" viewBox="0 0 14 14" fill="none" stroke="#111" strokeWidth="1.100"><path d="M.8 13C.8 6 6 1.500 13 1.500M3.800 13c0-5 4-8.500 9.200-8.500M6.800 13c0-3.200 2.800-5.500 6.200-5.500" /><circle cx="11.500" cy="12" r="1.600" fill="#111" stroke="none" /></svg>
        </TrayButton>
        <Language>ENG</Language>
        <Clock>0:08<br />17.12.2023</Clock>
        <NoticeButton aria-label="2 notifications">
          <svg width="26" height="26" viewBox="0 0 26 26">
            <path d="M1 2h16v12H8l-3 3v-3H1z" fill="#000" /><path d="M3.500 5.500h11M3.500 8h11M3.500 10.500h8" stroke="#fff" strokeWidth=".9" />
            <circle cx="17" cy="17.500" r="7.800" fill="#cfd3da" stroke="#8b8f96" strokeWidth=".8" />
            <text x="17" y="21.800" textAnchor="middle" fontFamily="'Open Sans', sans-serif" fontSize="12" fontWeight="600" fill="#111">2</text>
          </svg>
        </NoticeButton>
      </Tray>
    </Taskbar>
  );
}

export default function App() {
  return (
    <Screen>
      <GlobalStyle />
      <BrowserTabs />
      <BrowserToolbar />
      <Page>
        <ProjectSidebar />
        <PipelinePage />
        <ScrollRail share={77} />
      </Page>
      <WindowsTaskbar />
    </Screen>
  );
}
